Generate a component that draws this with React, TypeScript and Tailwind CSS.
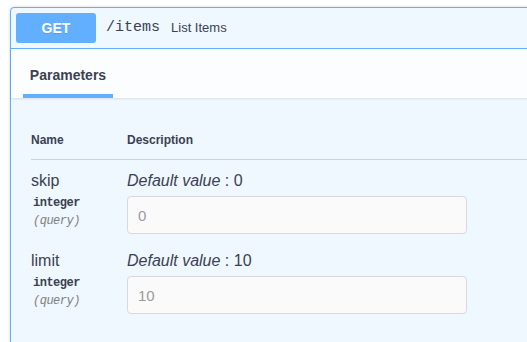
import React from "react";

const sans = { fontFamily: '"Liberation Sans", Arial, sans-serif' };
const mono = { fontFamily: '"Liberation Mono", "Courier New", monospace' };

function ParamRow({ name, def }: { name: string; def: string }) {
  return (
    <div className="flex pt-[11px] pb-[6px]">
      <div className="w-[96px] shrink-0">
        <div className="text-[16px] leading-[20px] text-[#3b4151]">{name}</div>
        <div
          className="mt-[4px] pl-[2px] text-[12px] leading-[16px] font-bold tracking-[-0.5px] text-[#3b4151]"
          style={mono}
        >
          integer
        </div>
        <div
          className="mt-[2px] pl-[2px] text-[12px] leading-[16px] italic tracking-[-0.5px] text-[#808080]"
          style={mono}
        >
          (query)
        </div>
      </div>
      <div className="flex flex-col">
        <div className="text-[16px] leading-[20px] text-[#3b4151]">
          <i>Default value</i> : {def}
        </div>
        <input
          readOnly
          value={def}
          className="mt-[5px] h-[38px] w-[340px] rounded-[4px] border border-[#d9d9d9] bg-[#fafafa] px-[10px] text-[15px] text-[#9b9b9b] outline-none"
          style={sans}
        />
      </div>
    </div>
  );
}

export default function App() {
  return (
    <div
      className="h-[342px] w-[527px] overflow-hidden bg-white pl-[10px] pt-[7px]"
      style={sans}
    >
      <div className="w-[560px] h-[400px] rounded-[4px] border border-[#61affe] bg-[#eff7ff] shadow-[0_0_3px_rgba(0,0,0,0.19)]">
        {/* summary */}
        <div className="flex h-[41px] items-center border-b border-[#61affe] px-[5px]">
          <div className="flex h-[30px] w-[80px] items-center justify-center rounded-[3px] bg-[#61affe] text-[14px] font-bold text-white [text-shadow:0_1px_0_rgba(0,0,0,0.1)]">
            GET
          </div>
          <div className="px-[10px] text-[15px] text-[#3b4151]" style={mono}>
            /items
          </div>
          <div className="pl-[1px] text-[13px] text-[#3b4151]">List Items</div>
        </div>
        {/* tab header */}
        <div className="relative h-[49px] bg-[#fcfdff] pl-[12px] pt-[16px] shadow-[0_1px_2px_rgba(0,0,0,0.1)]">
          <div className="flex w-[90px] flex-col items-center">
            <div className="text-[14px] font-bold leading-[20px] text-[#3b4151]">Parameters</div>
            <div className="mt-[9px] h-[4px] w-[90px] bg-[#61affe]" />
          </div>
        </div>
        {/* body */}
        <div className="pl-[20px]">
          <div className="flex border-b border-[#cbd3dc] pt-[34px] pb-[11px] text-[12px] font-bold leading-[16px] text-[#3b4151]">
            <div className="w-[96px]">Name</div>
            <div>Description</div>
          </div>
          <ParamRow name="skip" def="0" />
          <ParamRow name="limit" def="10" />
        </div>
      </div>
    </div>
  );
}
